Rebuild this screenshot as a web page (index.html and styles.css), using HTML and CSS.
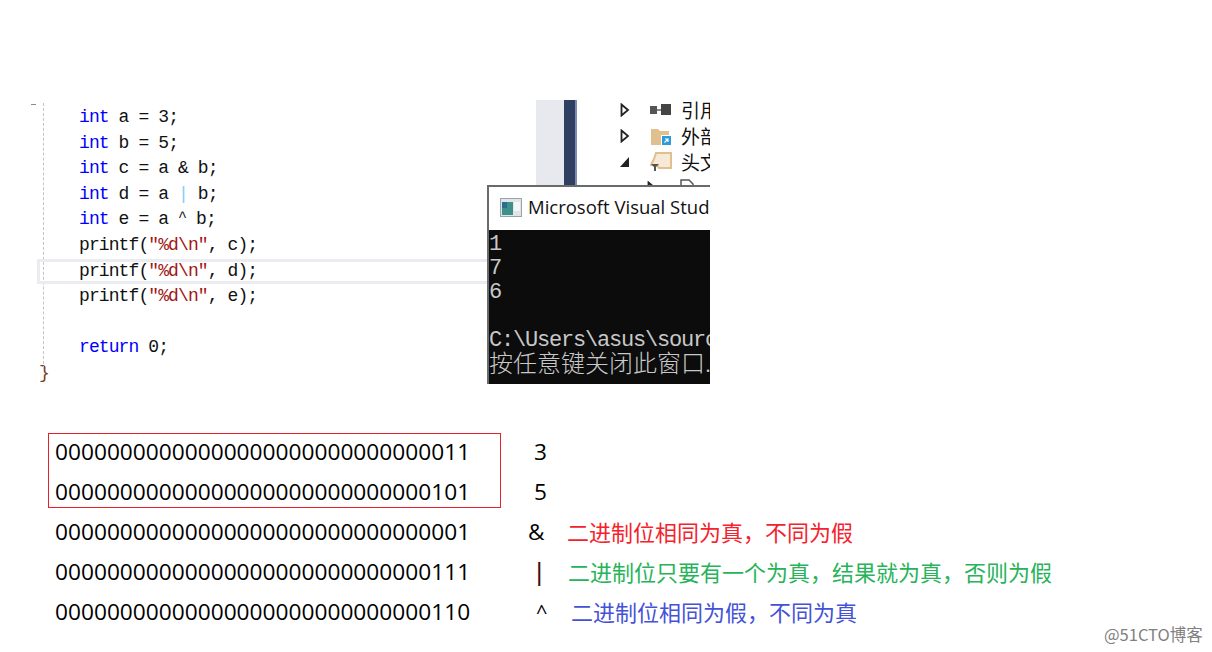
FILE: index.html
```html
<!DOCTYPE html>
<html lang="zh-CN">
<head>
<meta charset="utf-8">
<title>位运算</title>
<link rel="stylesheet" href="styles.css">
</head>
<body>
<main class="page">
  <section class="shot">
    <div class="editor">
      <span class="fold"></span>
      <span class="guide"></span>
      <span class="tick"></span>
      <span class="current"></span>
      <div class="code">
        <div class="line"><b class="kw">int</b> a = 3;</div>
        <div class="line"><b class="kw">int</b> b = 5;</div>
        <div class="line"><b class="kw">int</b> c = a &amp; b;</div>
        <div class="line"><b class="kw">int</b> d = a <b class="pipe">|</b> b;</div>
        <div class="line"><b class="kw">int</b> e = a <b class="caret">^</b> b;</div>
        <div class="line">printf(<b class="str">"%d\n"</b>, c);</div>
        <div class="line">printf(<b class="str">"%d\n"</b>, d);</div>
        <div class="line">printf(<b class="str">"%d\n"</b>, e);</div>
        <div class="line"></div>
        <div class="line"><b class="kw">return</b> 0;</div>
        <div class="line line-end">}</div>
      </div>
    </div>
    <div class="strip"></div>
    <div class="rail"></div>
    <div class="tree">
      <div class="node">
        <svg class="arrow" viewBox="0 0 10 14"><path d="M1.500 1.500 8 7l-6.500 5.500z" fill="#fff" stroke="#222" stroke-width="1.800"/></svg>
        <svg class="ico" viewBox="0 0 22 20"><rect x="0" y="6" width="7" height="8" fill="#555"/><rect x="7" y="9" width="4" height="2" fill="#888"/><rect x="11" y="4" width="10" height="11" fill="#444"/></svg>
        <span class="label">引用</span>
      </div>
      <div class="node">
        <svg class="arrow" viewBox="0 0 10 14"><path d="M1.500 1.500 8 7l-6.500 5.500z" fill="#fff" stroke="#222" stroke-width="1.800"/></svg>
        <svg class="ico" viewBox="0 0 22 20"><path d="M1 3h7l2 2h9v8H12v6H1z" fill="#e0c08f"/><rect x="11" y="9" width="11" height="11" fill="#fff"/><rect x="12" y="10" width="9" height="9" fill="#2e9ad8"/><path d="M14.500 16.500 18 13m-3 0h3v3" fill="none" stroke="#fff" stroke-width="1.200"/></svg>
        <span class="label">外部</span>
      </div>
      <div class="node">
        <svg class="arrow" viewBox="0 0 10 14"><path d="M9 2v10H0z" fill="#222"/></svg>
        <svg class="ico" viewBox="0 0 22 20"><path d="M6 1h15v15H9l-2-3H1l3-6z" fill="#f6ead6" stroke="#e0c08f" stroke-width="2"/><path d="M1 12h8L6 15v4H4v-4z" fill="#555"/></svg>
        <span class="label">头文</span>
      </div>
      <div class="node node-sub">
        <svg class="arrow" viewBox="0 0 10 14"><path d="M1.500 1.500 8 7l-6.500 5.500z" fill="#fff" stroke="#222" stroke-width="1.800"/></svg>
        <svg class="ico-doc" viewBox="0 0 14 18"><path d="M1 1h8l4 4v12H1z" fill="#fff" stroke="#555" stroke-width="1.500"/></svg>
      </div>
    </div>
    <div class="console">
      <div class="titlebar">
        <svg class="app" viewBox="0 0 22 19"><rect x=".5" y=".5" width="21" height="18" fill="#dfe5e8" stroke="#98a4a8"/><rect x="2" y="4" width="11" height="13" fill="#3f8f8a"/><rect x="2" y="4" width="5" height="6" fill="#2d6d8c"/><rect x="14" y="4" width="6" height="9" fill="#f4f6f6"/></svg>
        <span class="title">Microsoft Visual Stud</span>
      </div>
      <div class="output">
        <div class="out">1</div>
        <div class="out">7</div>
        <div class="out">6</div>
        <div class="out"></div>
        <div class="out">C:\Users\asus\sourc</div>
        <div class="out cjk">按任意键关闭此窗口.</div>
      </div>
    </div>
  </section>

  <section class="table">
    <span class="selection"></span>
    <div class="row"><span class="bits">00000000000000000000000000000011</span><span class="op op-num">3</span></div>
    <div class="row"><span class="bits">00000000000000000000000000000101</span><span class="op op-num">5</span></div>
    <div class="row"><span class="bits">00000000000000000000000000000001</span><span class="op op-and">&amp;</span><span class="note red">二进制位相同为真，不同为假</span></div>
    <div class="row"><span class="bits">00000000000000000000000000000111</span><span class="op op-or">|</span><span class="note green">二进制位只要有一个为真，结果就为真，否则为假</span></div>
    <div class="row"><span class="bits">00000000000000000000000000000110</span><span class="op op-xor">^</span><span class="note blue">二进制位相同为假，不同为真</span></div>
  </section>
  <span class="mark">@51CTO博客</span>
</main>
</body>
</html>
```
FILE: styles.css
```css
* { box-sizing: border-box; }
html, body { margin: 0; height: 100%; background: #fff; overflow: hidden; }

.page { position: relative; height: 652px; padding-top: 100px; }

/* embedded IDE screenshot */
.shot { position: relative; display: flex; width: 710px; height: 284px; overflow: hidden; }
.editor { position: relative; width: 536px; flex: none; }
.strip { width: 28px; flex: none; background: #e8e9ef; }
.rail { width: 13px; flex: none; background: #2f3f61; border-right: 2px solid #7c8bb0; }
.tree { flex: 1; min-width: 0; margin-top: -3px; overflow: hidden; font: 19px/26px "Noto Sans CJK SC", sans-serif; color: #111; }

.code { padding: 5px 0 0 79px; font: 18px/25.600px "Liberation Mono", monospace; letter-spacing: -.900px; color: #111; }
.code b { font-weight: 400; }
.line { height: 25.600px; white-space: pre; }
.kw { color: #0000ff; }
.str { color: #a31515; }
.pipe { color: #8ccbf5; }
.caret { position: relative; top: -3px; font-size: 15px; }
.line-end { margin-left: -40px; color: #7a3b10; }

.fold { position: absolute; left: 31px; top: 4px; width: 5px; height: 1px; background: #8a8a8a; }
.guide { position: absolute; left: 43px; top: 3px; height: 266px; border-left: 1px dashed #c4c4c4; }
.tick { position: absolute; left: 79px; top: -1px; width: 4px; height: 1px; background: #0a8a0a; }
.current { position: absolute; left: 37px; top: 159px; width: 499px; height: 25px; border: 3px solid #ebebf2; border-right: 0; }

.node { display: flex; align-items: center; height: 26px; padding-left: 43px; }
.arrow { width: 10px; height: 14px; flex: none; margin-right: 20px; }
.ico { width: 22px; height: 20px; flex: none; margin-right: 9px; }
.label { white-space: nowrap; }
.node-sub { padding-left: 70px; }
.ico-doc { width: 14px; height: 18px; flex: none; margin-left: 3px; }

/* console window over the IDE */
.console { position: absolute; left: 487px; top: 85px; width: 223px; height: 199px; overflow: hidden; background: #0c0c0c; border-left: 2px solid #6a6a6a; border-top: 2px solid #6a6a6a; }
.titlebar { display: flex; align-items: center; height: 43px; padding: 0 0 2px 11px; background: #fff; }
.app { width: 22px; height: 19px; flex: none; margin-right: 6px; }
.title { font: 18.500px/1 "Open Sans", sans-serif; color: #111; white-space: nowrap; }
.output { padding-top: 3px; font: 22px/24px "Liberation Mono", monospace; letter-spacing: -1.200px; color: #c8c8c8; }
.out { height: 24px; white-space: nowrap; }
.cjk { font: 300 24px/24px "Noto Sans CJK SC", sans-serif; letter-spacing: 0; margin-top: -3px; }

/* binary table */
.table { position: relative; margin-top: 48px; padding-left: 55px; }
.row { display: flex; align-items: center; height: 40px; white-space: nowrap; }
.bits { width: 473px; flex: none; font: 22.700px/40px "Open Sans", sans-serif; color: #000; }
.op { width: 39px; flex: none; font: 22.600px/40px "Open Sans", sans-serif; color: #000; }
.op-num { padding-left: 6px; }
.op-or { padding-left: 5px; font-weight: 600; color: #3a0c0c; }
.op-xor { padding-left: 8px; font-size: 20px; }
.note { font: 22px/40px "Noto Sans CJK SC", sans-serif; padding-bottom: 3px; }
.red { color: #f5222d; }
.green { color: #27b35a; margin-left: 1px; }
.blue { color: #4452d8; margin-left: 4px; }
.selection { position: absolute; left: 48px; top: 1px; width: 453px; height: 75px; border: 1px solid #e8202a; }

.mark { position: absolute; left: 1104px; top: 624px; font: 16.500px/20px "Noto Sans CJK SC", sans-serif; color: #808080; white-space: nowrap; }
```
